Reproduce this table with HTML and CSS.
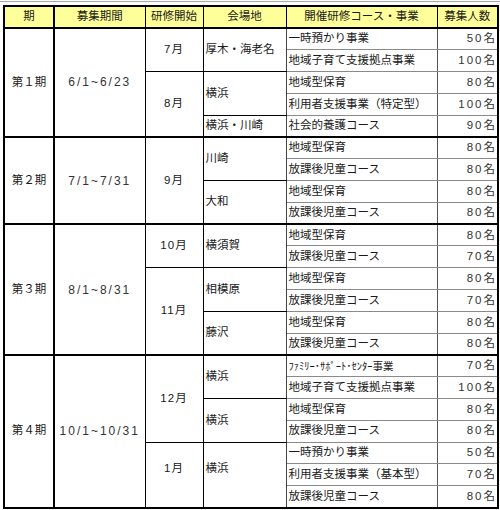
FILE: index.html
```html
<!DOCTYPE html>
<html lang="ja">
<head>
<meta charset="utf-8">
<title>研修日程</title>
<link rel="stylesheet" href="styles.css">
</head>
<body>
<div class="frame">
<table class="sched">
  <colgroup>
    <col class="c-period"><col class="c-date"><col class="c-month"><col class="c-venue"><col class="c-course"><col class="c-num">
  </colgroup>
  <thead>
    <tr>
      <th class="period">期</th><th>募集期間</th><th>研修開始</th><th>会場地</th><th>開催研修コース・事業</th><th>募集人数</th>
    </tr>
  </thead>
  <tbody>
    <tr class="p-start">
      <td class="period" rowspan="5">第１期</td><td class="date" rowspan="5">6/1~6/23</td>
      <td class="month" rowspan="2">7月</td><td class="venue" rowspan="2">厚木・海老名</td>
      <td class="course">一時預かり事業</td><td class="num">50名</td>
    </tr>
    <tr><td class="course">地域子育て支援拠点事業</td><td class="num">100名</td></tr>
    <tr>
      <td class="month" rowspan="3">8月</td><td class="venue" rowspan="2">横浜</td>
      <td class="course">地域型保育</td><td class="num">80名</td>
    </tr>
    <tr><td class="course">利用者支援事業（特定型）</td><td class="num">100名</td></tr>
    <tr><td class="venue">横浜・川崎</td><td class="course">社会的養護コース</td><td class="num">90名</td></tr>

    <tr class="p-start">
      <td class="period" rowspan="4">第２期</td><td class="date" rowspan="4">7/1~7/31</td>
      <td class="month" rowspan="4">9月</td><td class="venue" rowspan="2">川崎</td>
      <td class="course">地域型保育</td><td class="num">80名</td>
    </tr>
    <tr><td class="course">放課後児童コース</td><td class="num">80名</td></tr>
    <tr><td class="venue" rowspan="2">大和</td><td class="course">地域型保育</td><td class="num">80名</td></tr>
    <tr><td class="course">放課後児童コース</td><td class="num">80名</td></tr>

    <tr class="p-start">
      <td class="period" rowspan="6">第３期</td><td class="date" rowspan="6">8/1~8/31</td>
      <td class="month" rowspan="2">10月</td><td class="venue" rowspan="2">横須賀</td>
      <td class="course">地域型保育</td><td class="num">80名</td>
    </tr>
    <tr><td class="course">放課後児童コース</td><td class="num">70名</td></tr>
    <tr>
      <td class="month" rowspan="4">11月</td><td class="venue" rowspan="2">相模原</td>
      <td class="course">地域型保育</td><td class="num">80名</td>
    </tr>
    <tr><td class="course">放課後児童コース</td><td class="num">70名</td></tr>
    <tr><td class="venue" rowspan="2">藤沢</td><td class="course">地域型保育</td><td class="num">80名</td></tr>
    <tr><td class="course">放課後児童コース</td><td class="num">80名</td></tr>

    <tr class="p-start">
      <td class="period" rowspan="7">第４期</td><td class="date" rowspan="7">10/1~10/31</td>
      <td class="month" rowspan="4">12月</td><td class="venue" rowspan="2">横浜</td>
      <td class="course narrow">ﾌｧﾐﾘｰ･ｻﾎﾟｰﾄ･ｾﾝﾀｰ事業</td><td class="num">70名</td>
    </tr>
    <tr><td class="course">地域子育て支援拠点事業</td><td class="num">100名</td></tr>
    <tr><td class="venue" rowspan="2">横浜</td><td class="course">地域型保育</td><td class="num">80名</td></tr>
    <tr><td class="course">放課後児童コース</td><td class="num">80名</td></tr>
    <tr>
      <td class="month raised" rowspan="3">1月</td><td class="venue raised" rowspan="3">横浜</td>
      <td class="course">一時預かり事業</td><td class="num">50名</td>
    </tr>
    <tr><td class="course">利用者支援事業（基本型）</td><td class="num">70名</td></tr>
    <tr><td class="course">放課後児童コース</td><td class="num">80名</td></tr>
  </tbody>
</table>
</div>
</body>
</html>
```
FILE: styles.css
```css
html, body {
  margin: 0;
  padding: 0;
  background: #ffffff;
}

body {
  font-family: "Liberation Sans", "Noto Sans CJK JP", sans-serif;
  font-size: 11.5px;
  color: #1a1a1a;
}

.frame {
  width: 498px;
  margin-top: 1px;
  border-top: 1px solid #a8a8a8;
  padding: 3px 0 0 3px;
}

.sched {
  border-collapse: collapse;
  table-layout: fixed;
  width: 494px;
  border: 2px solid #000;
}

.c-period { width: 50px; }
.c-date { width: 91px; }
.c-month { width: 58px; }
.c-venue { width: 83px; }
.c-course { width: 151px; }
.c-num { width: 61px; }

.sched th {
  height: 20px;
  padding: 0;
  background: #ffff99;
  font-weight: normal;
  text-align: center;
  border: 1px solid #000;
  border-bottom: 2px solid #000;
  white-space: nowrap;
  line-height: 1;
}

.sched td {
  height: 21.8px;
  padding: 0 2px;
  border: 1px solid #8a8a8a;
  white-space: nowrap;
  line-height: 1;
  vertical-align: middle;
  box-sizing: border-box;
}

.sched th.period,
.sched td.period {
  border-right: 2px solid #000;
}

.sched td.period {
  text-align: center;
}

.sched td.date {
  text-align: center;
  letter-spacing: 2px;
  color: #333;
  font-size: 12px;
  border-right: 1px solid #000;
}

.sched td.month {
  text-align: center;
  letter-spacing: 1px;
  border: 1px solid #000;
}

.sched td.venue {
  text-align: left;
  border: 1px solid #000;
  border-right: 1px solid #444;
}

.sched td.course {
  text-align: left;
  border-right: 1px solid #555;
}

.sched td.course.narrow {
  font-size: 10.5px;
}

.sched td.num {
  text-align: right;
  padding-right: 0;
  letter-spacing: 2px;
  color: #333;
}

.sched td.raised {
  padding-bottom: 12px;
}

.sched tr.p-start td {
  border-top: 2px solid #000;
}
```
